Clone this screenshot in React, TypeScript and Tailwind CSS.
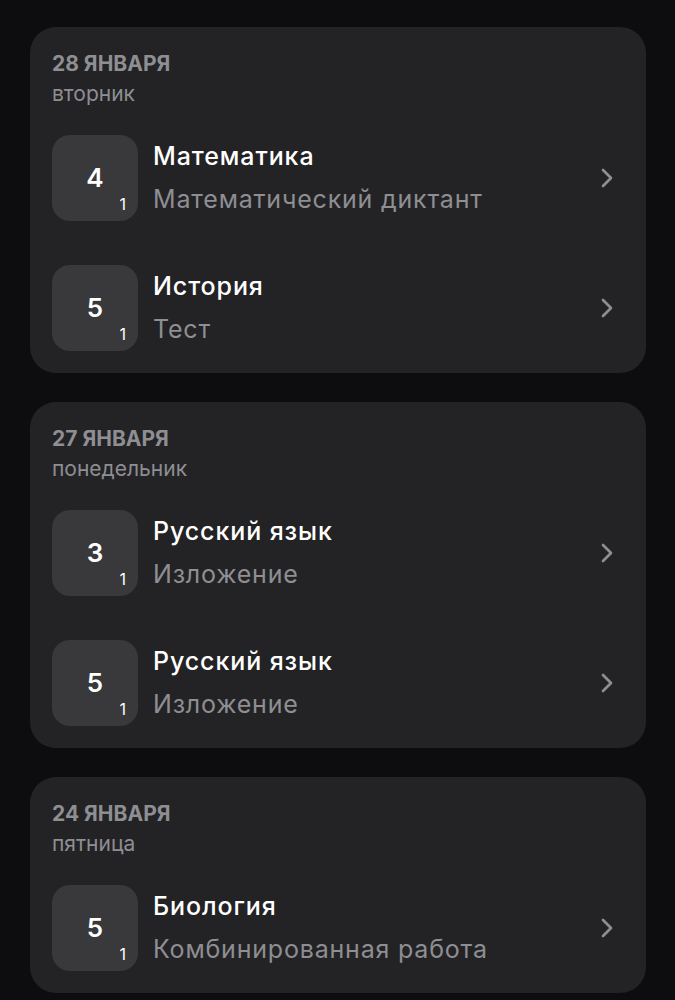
import { ChevronRight } from "lucide-react";

interface Mark {
  grade: number;
  weight: number;
  subject: string;
  work: string;
}

interface Day {
  date: string;
  weekday: string;
  marks: Mark[];
}

const days: Day[] = [
  {
    date: "28 января",
    weekday: "вторник",
    marks: [
      { grade: 4, weight: 1, subject: "Математика", work: "Математический диктант" },
      { grade: 5, weight: 1, subject: "История", work: "Тест" },
    ],
  },
  {
    date: "27 января",
    weekday: "понедельник",
    marks: [
      { grade: 3, weight: 1, subject: "Русский язык", work: "Изложение" },
      { grade: 5, weight: 1, subject: "Русский язык", work: "Изложение" },
    ],
  },
  {
    date: "24 января",
    weekday: "пятница",
    marks: [
      { grade: 5, weight: 1, subject: "Биология", work: "Комбинированная работа" },
    ],
  },
];

const MarkRow = ({ mark }: { mark: Mark }) => (
  <div className="flex items-center">
    <div className="relative w-[86px] h-[86px] shrink-0 rounded-[18px] bg-[#39393c] flex items-center justify-center">
      <span className="text-[26px] leading-none font-semibold text-white">
        {mark.grade}
      </span>
      <span className="absolute right-[12px] bottom-[7px] text-[16px] leading-[20px] text-white">
        {mark.weight}
      </span>
    </div>
    <div className="ml-[15px] flex-1 min-w-0">
      <div className="text-[25px] leading-[41px] tracking-[0.9px] font-medium text-white truncate">
        {mark.subject}
      </div>
      <div className="text-[25px] leading-[41px] mt-[2px] tracking-[0.8px] text-[#8e8e93] truncate">
        {mark.work}
      </div>
    </div>
    <ChevronRight
      className="w-[32px] h-[32px] text-[#8e8e93] mr-[23px] shrink-0"
      strokeWidth={2}
    />
  </div>
);

export default function App() {
  return (
    <div
      className="min-h-screen bg-[#0d0d0f] pt-[27px] pl-[30px] pr-[29px] flex flex-col gap-[29px]"
      style={{ fontFamily: "Inter, 'Noto Sans', sans-serif" }}
    >
      {days.map((day) => (
        <div
          key={day.date}
          className="bg-[#232325] rounded-[26px] pl-[22px] pt-[23px] pb-[22px]"
        >
          <div className="text-[21px] leading-[28px] font-bold uppercase text-[#8e8e93]">
            {day.date}
          </div>
          <div className="text-[21px] leading-[28px] text-[#8e8e93] mt-[2px]">
            {day.weekday}
          </div>
          <div className="mt-[27px] flex flex-col gap-[44px]">
            {day.marks.map((m, i) => (
              <MarkRow key={i} mark={m} />
            ))}
          </div>
        </div>
      ))}
    </div>
  );
}
